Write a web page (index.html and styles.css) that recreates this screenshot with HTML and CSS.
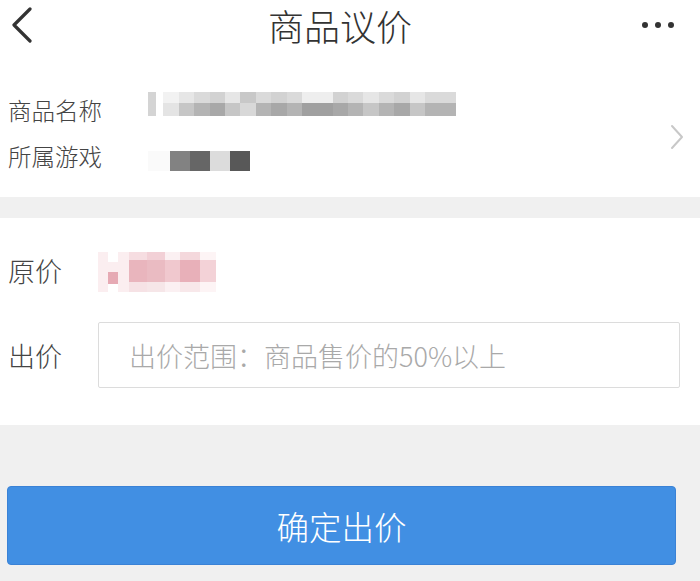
FILE: index.html
```html
<!DOCTYPE html>
<html lang="zh-CN">
  <head>
    <meta charset="UTF-8" />
    <meta name="viewport" content="width=device-width, initial-scale=1.0" />
    <title>商品议价</title>
    <link rel="stylesheet" href="styles.css">
  </head>
  <body>
    <div class="navbar">
      <button class="nav-back" aria-label="返回">
        <svg width="24" height="36" viewBox="0 0 24 36">
          <path d="M20 2 L4 18 L20 34" fill="none" stroke="#333" stroke-width="3.2" stroke-linecap="round" stroke-linejoin="round" />
        </svg>
      </button>
      <h1 class="nav-title">商品议价</h1>
      <button class="nav-more" aria-label="更多">
        <span></span><span></span><span></span>
      </button>
    </div>

    <div class="goods">
      <div class="goods-rows">
        <div class="row">
          <span class="label">商品名称</span>
          <span class="mosaic mosaic-name">
            <i></i><i></i><i></i><i></i><i></i><i></i><i></i><i></i><i></i><i></i>
            <i></i><i></i><i></i><i></i><i></i><i></i><i></i><i></i><i></i><i></i>
          </span>
        </div>
        <div class="row">
          <span class="label">所属游戏</span>
          <span class="mosaic mosaic-game">
            <i></i><i></i><i></i><i></i><i></i>
          </span>
        </div>
      </div>
      <svg class="chevron" width="14" height="26" viewBox="0 0 14 26">
        <path d="M2 2 L12 13 L2 24" fill="none" stroke="#c8c8c8" stroke-width="2" stroke-linecap="round" stroke-linejoin="round" />
      </svg>
    </div>

    <div class="divider"></div>

    <div class="offer">
      <div class="row row-price">
        <span class="label label-lg">原价</span>
        <span class="mosaic mosaic-price">
          <i></i><i></i><i></i><i></i><i></i><i></i><i></i><i></i>
        </span>
      </div>
      <div class="row row-input">
        <span class="label label-lg">出价</span>
        <input type="text" class="offer-input" placeholder="出价范围：商品售价的50%以上" />
      </div>
    </div>

    <div class="footer">
      <button class="btn-submit">确定出价</button>
    </div>
  </body>
</html>
```

FILE: styles.css
```css
* {
  box-sizing: border-box;
}

body {
  margin: 0;
  padding: 0;
  font-family: "Noto Sans CJK SC", "Noto Sans", sans-serif;
  font-weight: 300;
  background: #fff;
  color: #333;
  min-height: 100vh;
  display: flex;
  flex-direction: column;
}

button {
  font-family: inherit;
  font-weight: inherit;
  border: none;
  background: none;
  padding: 0;
  cursor: pointer;
}

/* top bar */
.navbar {
  height: 50px;
  display: flex;
  align-items: center;
  justify-content: space-between;
  padding: 0 22px 0 10px;
}

.nav-back {
  width: 28px;
  height: 40px;
  display: flex;
  align-items: center;
}

.nav-title {
  margin: 0;
  font-size: 36px;
  font-weight: 300;
  color: #333;
  line-height: 1;
}

.nav-more {
  display: flex;
  gap: 7px;
  width: 36px;
}

.nav-more span {
  width: 6px;
  height: 6px;
  border-radius: 50%;
  background: #333;
}

/* goods info */
.goods {
  display: flex;
  align-items: center;
  justify-content: space-between;
  padding: 37px 16px 18px 8px;
}

.row {
  display: flex;
  align-items: center;
  height: 46px;
}

.label {
  font-size: 23.5px;
  color: #444;
  width: 140px;
  flex-shrink: 0;
}

.label-lg {
  font-size: 27px;
  width: 90px;
}

.mosaic {
  display: grid;
}

.mosaic i {
  display: block;
}

.mosaic-name {
  grid-template-columns: repeat(20, 15.4px);
  grid-template-rows: 12px 12px 6px;
  margin-top: -6px;
}

.mosaic-name i {
  grid-row: 1 / 3;
  background: linear-gradient(to bottom, #dadada 0 45%, #b4b4b4 45% 100%);
}

.mosaic-name i:nth-child(3n) {
  background: linear-gradient(to bottom, #e6e6e6 0 45%, #c6c6c6 45% 100%);
}

.mosaic-name i:nth-child(4n + 1) {
  background: linear-gradient(to bottom, #d2d2d2 0 45%, #a8a8a8 45% 100%);
}

.mosaic-name i:nth-child(1) {
  background: #d4d4d4;
  width: 8px;
}

.mosaic-name i:nth-child(2) {
  background: linear-gradient(to bottom, #f2f2f2 0 45%, #e4e4e4 45% 100%);
}

.mosaic-name i:nth-child(7) {
  background: linear-gradient(to bottom, #c8c8c8 0 45%, #d8d8d8 45% 100%);
}

.mosaic-name i:nth-child(11),
.mosaic-name i:nth-child(12) {
  background: linear-gradient(to bottom, #eeeeee 0 45%, #a0a0a0 45% 100%);
}

.mosaic-game {
  grid-template-columns: 22px 20px 20px 20px 20px;
  grid-template-rows: 20px;
  margin-top: 10px;
}

.mosaic-game i:nth-child(1) { background: #fafafa; }
.mosaic-game i:nth-child(2) { background: #828282; }
.mosaic-game i:nth-child(3) { background: #666; }
.mosaic-game i:nth-child(4) { background: #dcdcdc; }
.mosaic-game i:nth-child(5) { background: #585858; }

.chevron {
  margin-top: 8px;
}

.divider {
  height: 21px;
  background: #f0f0f0;
}

/* offer */
.offer {
  display: flex;
  flex-direction: column;
  gap: 29px;
  padding: 29px 20px 37px 8px;
}

.mosaic-price {
  grid-template-columns: 10px 10px 11px 18px 18px 15px 20px 16px;
  grid-template-rows: 10px 22px 8px;
  margin-top: 4px;
}

.mosaic-price i {
  grid-row: 1 / 4;
  background: #fbeef0;
}

.mosaic-price i:nth-child(2) {
  grid-row: 2 / 3;
  background: linear-gradient(to bottom, #fbeef0 0 45%, #e6aab4 45% 100%);
}

.mosaic-price i:nth-child(4) { background: linear-gradient(to bottom, #f6dde1 0 20%, #e9b5bd 20% 75%, #f6e2e5 75%); }
.mosaic-price i:nth-child(5) { background: linear-gradient(to bottom, #f2d0d6 0 20%, #eabbc2 20% 75%, #f6e6e8 75%); }
.mosaic-price i:nth-child(6) { background: linear-gradient(to bottom, #fbf0f2 0 20%, #f0c8ce 20% 75%, #fbf0f2 75%); }
.mosaic-price i:nth-child(7) { background: linear-gradient(to bottom, #f4d8dc 0 20%, #e8b0b9 20% 75%, #f8e8ea 75%); }
.mosaic-price i:nth-child(8) { background: linear-gradient(to bottom, #fdf4f5 0 20%, #f3d2d7 20% 75%, #fdf4f5 75%); }

.row-input {
  height: 66px;
}

.offer-input {
  flex: 1;
  height: 66px;
  border: 1px solid #dcdcdc;
  border-radius: 2px;
  padding: 0 30px;
  font-family: inherit;
  font-weight: inherit;
  font-size: 27px;
  color: #333;
  outline: none;
}

.offer-input::placeholder {
  color: #a9a9a9;
}

/* bottom action */
.footer {
  flex: 1;
  background: #f0f0f0;
  padding: 61px 24px 0 7px;
}

.btn-submit {
  width: 100%;
  height: 79px;
  background: #418fe3;
  border: 1px solid #3a82d6;
  border-radius: 4px;
  color: #fff;
  font-size: 32.5px;
}
```
